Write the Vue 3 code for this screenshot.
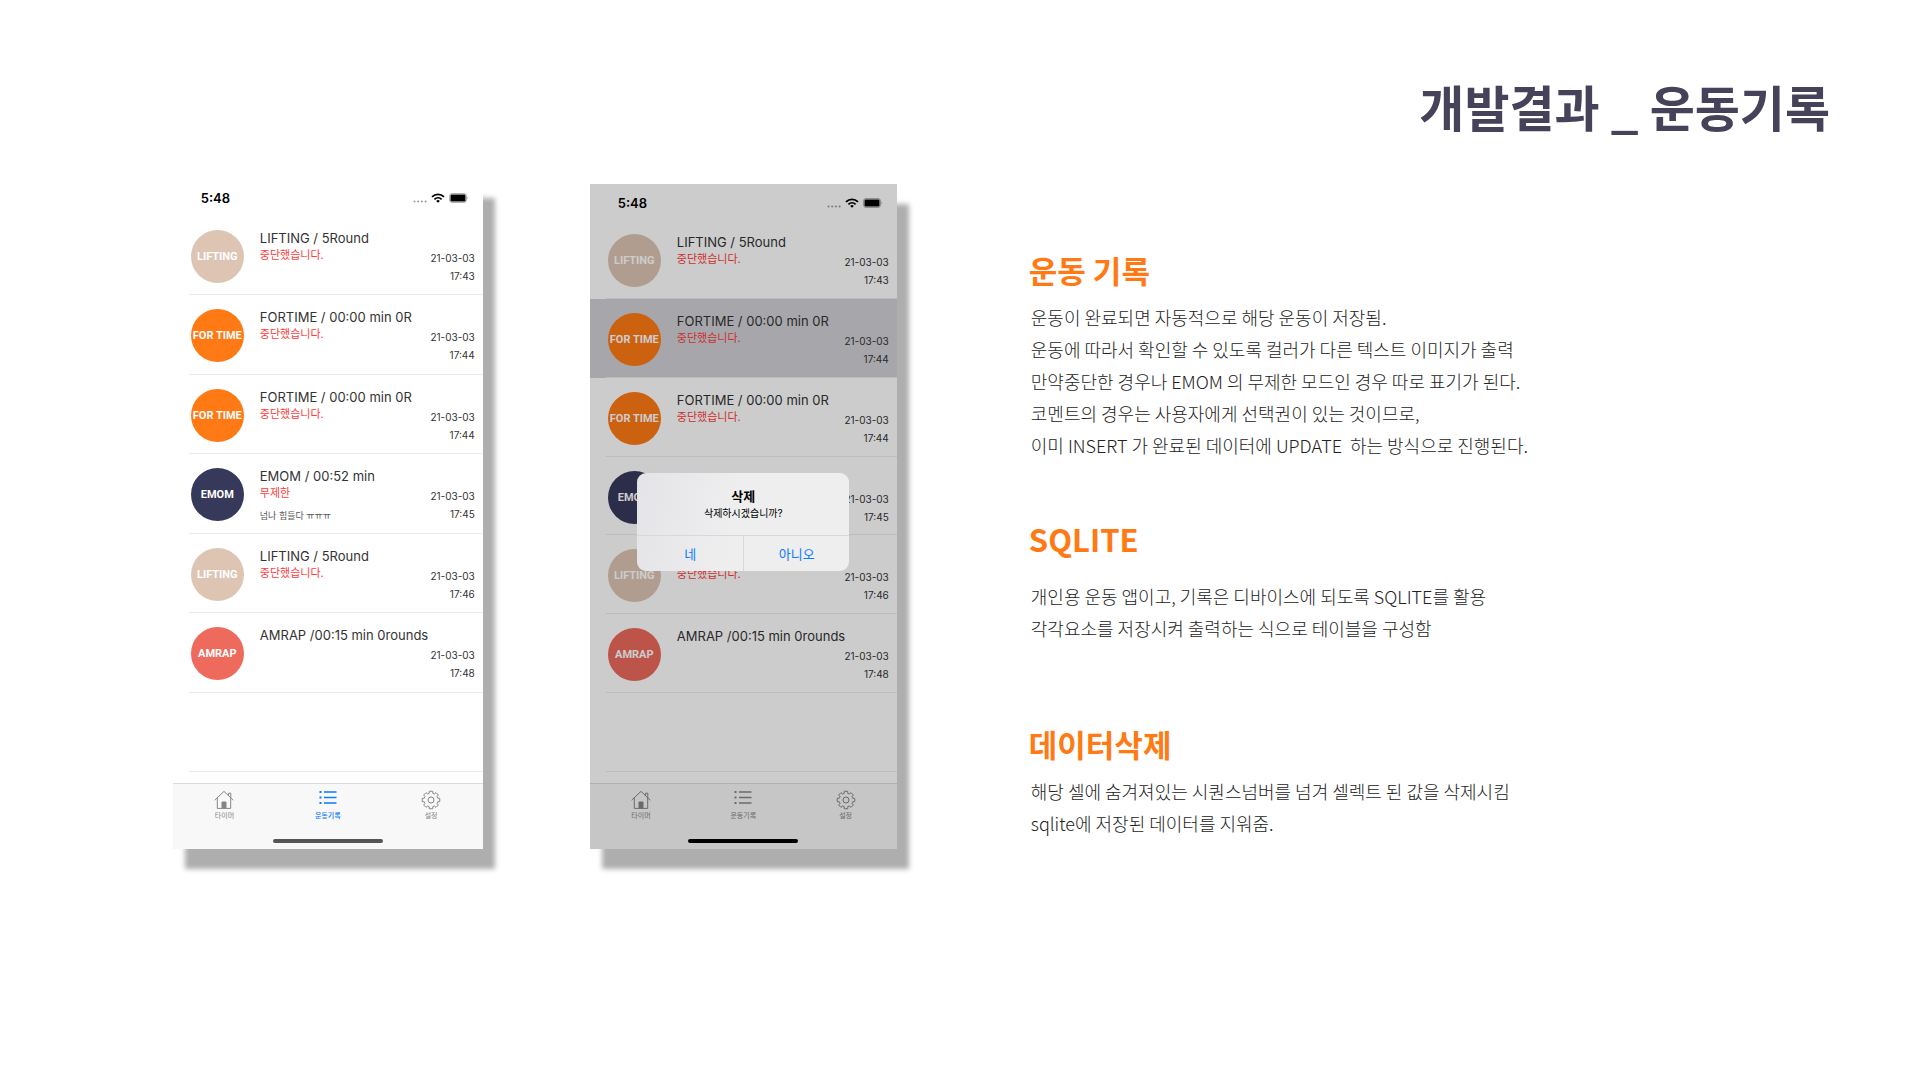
<script setup>
const records = [
  { kind: 'LIFTING', color: '#dec5b3', title: 'LIFTING / 5Round', status: '중단했습니다.', time: '17:43' },
  { kind: 'FOR TIME', color: '#ff7a14', title: 'FORTIME / 00:00 min 0R', status: '중단했습니다.', time: '17:44' },
  { kind: 'FOR TIME', color: '#ff7a14', title: 'FORTIME / 00:00 min 0R', status: '중단했습니다.', time: '17:44' },
  { kind: 'EMOM', color: '#37395a', title: 'EMOM / 00:52 min', status: '무제한', note: '넘나 힘들다 ㅠㅠㅠ', time: '17:45' },
  { kind: 'LIFTING', color: '#dec5b3', title: 'LIFTING / 5Round', status: '중단했습니다.', time: '17:46' },
  { kind: 'AMRAP', color: '#ed6a5c', title: 'AMRAP /00:15 min 0rounds', time: '17:48' },
]

const phones = [
  { id: 'history', active: true, selected: -1, confirm: false },
  { id: 'delete', active: false, selected: 1, confirm: true },
]

const tabs = [
  { icon: 'home', label: '타이머' },
  { icon: 'list', label: '운동기록' },
  { icon: 'gear', label: '설정' },
]

const sections = [
  {
    id: 'about-history',
    heading: '운동 기록',
    lines: [
      '운동이 완료되면 자동적으로 해당 운동이 저장됨.',
      '운동에 따라서 확인할 수 있도록 컬러가 다른 텍스트 이미지가 출력',
      '만약중단한 경우나 EMOM 의 무제한 모드인 경우 따로 표기가 된다.',
      '코멘트의 경우는 사용자에게 선택권이 있는 것이므로,',
      '이미 INSERT 가 완료된 데이터에 UPDATE  하는 방식으로 진행된다.',
    ],
  },
  {
    id: 'about-sqlite',
    heading: 'SQLITE',
    lines: [
      '개인용 운동 앱이고, 기록은 디바이스에 되도록 SQLITE를 활용',
      '각각요소를 저장시켜 출력하는 식으로 테이블을 구성함',
    ],
  },
  {
    id: 'about-delete',
    heading: '데이터삭제',
    lines: [
      '해당 셀에 숨겨져있는 시퀀스넘버를 넘겨 셀렉트 된 값을 삭제시킴',
      'sqlite에 저장된 데이터를 지워줌.',
    ],
  },
]

// Outline of an eight-toothed gear centred on (10, 10).
function gearPath() {
  const points = []
  for (let i = 0; i < 8; i++) {
    const a = (i * Math.PI) / 4 - Math.PI / 2
    for (const [offset, r] of [[-0.27, 6.9], [-0.19, 8.9], [0.19, 8.9], [0.27, 6.9]]) {
      points.push(`${(10 + r * Math.cos(a + offset)).toFixed(2)} ${(10 + r * Math.sin(a + offset)).toFixed(2)}`)
    }
  }
  return `M${points.join('L')}Z`
}
const gear = gearPath()
</script>

<template>
  <div class="slide">
    <header class="slide-head">
      <h1>개발결과 _ 운동기록</h1>
    </header>
    <main class="content">
      <section v-for="phone in phones" :key="phone.id" class="phone" :class="phone.id">
        <div class="status-bar">
          <span class="clock">5:48</span>
          <svg class="dots" width="14" height="10" viewBox="0 0 14 10" fill="#999">
            <circle cx="1.5" cy="8.5" r="1" /><circle cx="5.2" cy="8.5" r="1" />
            <circle cx="8.9" cy="8.5" r="1" /><circle cx="12.6" cy="8.5" r="1" />
          </svg>
          <svg width="14" height="10" viewBox="0 0 14 10" fill="none" stroke="#000" stroke-width="1.8">
            <path d="M1 3.9a8.6 8.6 0 0 1 12 0" />
            <path d="M3.4 6.3a5.2 5.2 0 0 1 7.2 0" />
            <path d="M7 9.8 5.1 7.9a2.8 2.8 0 0 1 3.8 0Z" fill="#000" stroke="none" />
          </svg>
          <svg class="battery" width="20" height="10" viewBox="0 0 20 10">
            <rect x=".5" y=".5" width="17" height="9" rx="2.5" fill="none" stroke="#000" stroke-opacity=".3" />
            <rect x="1.5" y="1.5" width="15" height="7" rx="1.2" />
            <path d="M18.5 3.5q1.5 1.5 0 3Z" fill-opacity=".45" />
          </svg>
        </div>

        <ul class="records">
          <li v-for="(record, i) in records" :key="i" class="record" :class="{ selected: i === phone.selected }">
            <span class="badge" :style="{ background: record.color }">{{ record.kind }}</span>
            <div class="details">
              <p class="title">{{ record.title }}</p>
              <p v-if="record.status" class="state">{{ record.status }}</p>
              <p v-if="record.note" class="note">{{ record.note }}</p>
            </div>
            <p class="when">21-03-03<br>{{ record.time }}</p>
          </li>
          <li class="record"></li>
        </ul>

        <nav class="tab-bar">
          <button v-for="tab in tabs" :key="tab.icon" type="button" class="tab" :class="{ active: phone.active && tab.icon === 'list' }">
            <svg width="20" height="20" viewBox="0 0 20 20" fill="none" stroke="currentColor">
              <template v-if="tab.icon === 'home'">
                <path d="M.6 10.2 10 1.4l9.4 8.8M3.3 8v10.4h13.4V8M14.6 5.4V3.2h2.2v4.4" />
                <path d="M8 18v-6h4v6Z" fill="currentColor" />
              </template>
              <template v-else-if="tab.icon === 'list'">
                <path d="M6 2h12.5M6 7.5h12.5M6 13h12.5" stroke-width="1.3" />
                <path d="M1.5 2h2M1.5 7.5h2M1.5 13h2" stroke-width="2" />
              </template>
              <template v-else>
                <path :d="gear" stroke-linejoin="round" />
                <circle cx="10" cy="10" r="3" />
              </template>
            </svg>
            <span>{{ tab.label }}</span>
          </button>
        </nav>
        <div class="home-area"><span class="home-indicator"></span></div>

        <div v-if="phone.confirm" class="backdrop">
          <div class="alert" role="alertdialog" aria-labelledby="alert-title" aria-describedby="alert-text">
            <div class="alert-body">
              <h2 id="alert-title">삭제</h2>
              <p id="alert-text">삭제하시겠습니까?</p>
            </div>
            <div class="alert-actions">
              <button type="button">네</button>
              <button type="button">아니오</button>
            </div>
          </div>
        </div>
      </section>

      <article class="notes">
        <section v-for="section in sections" :key="section.id" class="note-block" :class="section.id">
          <h2>{{ section.heading }}</h2>
          <p v-for="line in section.lines" :key="line">{{ line }}</p>
        </section>
      </article>
    </main>
  </div>
</template>

<style>
body {
  margin: 0;
  background: #fff;
}
</style>

<style scoped>
.slide {
  min-height: 100vh;
  font-family: "Noto Sans CJK KR", sans-serif;
  color: #333;
}
h1, h2, p, ul {
  margin: 0;
  padding: 0;
}
button {
  padding: 0;
  border: 0;
  background: none;
  font: inherit;
}
.slide-head {
  display: flex;
  justify-content: flex-end;
  padding: 70px 90px 36px 0;
}
h1 {
  font-size: 49px;
  line-height: 72px;
  font-weight: 700;
  color: #464259;
}
.content {
  display: grid;
  grid-template-columns: 310px 307px 1fr;
  column-gap: 107px;
  align-items: end;
  padding: 0 0 40px 9%;
}
.phone {
  position: relative;
  display: flex;
  flex-direction: column;
  height: 671px;
  background: #fff;
  box-shadow: 12px 20px 5px #aeaeae;
  font-family: Inter, "Noto Sans CJK KR", sans-serif;
}
.delete {
  height: 665px;
}
.status-bar {
  display: flex;
  align-items: center;
  height: 38px;
  padding: 2px 14px 0 28px;
  box-sizing: border-box;
}
.delete .status-bar {
  height: 36px;
}
.clock {
  flex: 1;
  font-size: 13px;
  line-height: 16px;
  font-weight: 600;
  color: #000;
}
.dots {
  margin-right: 4px;
}
.battery {
  margin-left: 4px;
}
.records {
  flex: 1;
  display: grid;
  grid-template-rows: repeat(7, 1fr);
  margin-bottom: 11px;
  list-style: none;
}
.record {
  position: relative;
  display: flex;
  padding: 14px 8px 0 18px;
}
.record::after {
  content: "";
  position: absolute;
  inset: auto 0 0 16px;
  height: 1px;
  background: #ebebeb;
}
.selected {
  background: #d1d1d6;
}
.badge {
  flex: none;
  width: 53px;
  height: 53px;
  border-radius: 50%;
  color: #fff;
  font-family: Roboto, sans-serif;
  font-size: 11px;
  font-weight: 700;
  line-height: 53px;
  text-align: center;
  white-space: nowrap;
}
.details {
  flex: 1;
  margin-left: 16px;
  white-space: nowrap;
}
.title {
  font-size: 13px;
  line-height: 17px;
}
.state {
  font-size: 11px;
  line-height: 17px;
  color: #ff3b3b;
}
.note {
  margin-top: 7px;
  font-size: 9px;
  line-height: 14px;
  color: #555;
}
.when {
  width: 0;
  margin-top: 19px;
  display: flex;
  justify-content: flex-end;
  font-size: 10px;
  line-height: 18px;
  text-align: right;
  white-space: nowrap;
}
.tab-bar {
  display: grid;
  grid-template-columns: repeat(3, 1fr);
  height: 50px;
  border-top: 1px solid #dcdcdc;
  box-sizing: border-box;
  background: #f8f8f8;
}
.tab {
  display: flex;
  flex-direction: column;
  align-items: center;
  padding-top: 6px;
  color: #858585;
  font-size: 7px;
  line-height: 12px;
}
.active {
  color: #0a7aff;
  font-weight: 500;
}
.home-area {
  display: flex;
  justify-content: center;
  height: 16px;
  background: #f8f8f8;
}
.home-indicator {
  width: 110px;
  height: 4px;
  margin-top: 6px;
  border-radius: 2px;
  background: #555;
}
.delete .home-indicator {
  background: #000;
}
.backdrop {
  position: absolute;
  inset: 0;
  display: flex;
  align-items: center;
  justify-content: center;
  padding-top: 10px;
  background: rgba(0, 0, 0, 0.2);
}
.alert {
  width: 212px;
  border-radius: 9px;
  background: linear-gradient(100deg, #e4e4e8, #eeeeef 45%);
  color: #000;
  text-align: center;
}
.alert-body {
  padding: 14px 0;
}
.alert h2 {
  font-size: 13px;
  line-height: 18px;
  font-weight: 700;
}
.alert p {
  font-size: 10px;
  line-height: 16px;
}
.alert-actions {
  display: grid;
  grid-template-columns: 1fr 1fr;
  height: 36px;
  border-top: 1px solid #d8d8da;
  box-sizing: border-box;
}
.alert-actions button {
  color: #0a7aff;
  font-size: 13px;
}
.alert-actions button + button {
  border-left: 1px solid #d8d8da;
}
.notes {
  align-self: start;
  margin-left: 25px;
  padding-top: 72px;
}
.notes h2 {
  margin-bottom: 11px;
  color: #ff7a14;
  font-size: 31px;
  line-height: 40px;
  font-weight: 700;
}
.notes p {
  padding-left: 2px;
  color: #222;
  font-size: 18px;
  line-height: 32px;
  font-weight: 300;
  white-space: pre-wrap;
}
.note-block + .note-block {
  margin-top: 58px;
}
.notes .about-sqlite h2 {
  margin-bottom: 21px;
}
.note-block.about-delete {
  margin-top: 80px;
}
</style>
